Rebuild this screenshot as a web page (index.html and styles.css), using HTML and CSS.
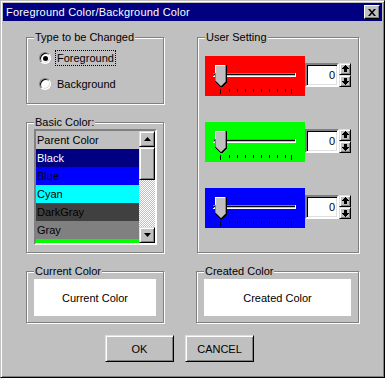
FILE: index.html
```html
<!DOCTYPE html>
<html>
<head>
<meta charset="utf-8">
<link rel="stylesheet" href="styles.css">
</head>
<body>
<div class="window">
  <div class="titlebar">
    <span class="title">Foreground Color/Background Color</span>
    <div class="close"><svg width="8" height="7" viewBox="0 0 8 7"><polygon points="0,0 2,0 8,7 6,7" fill="#000"/><polygon points="6,0 8,0 2,7 0,7" fill="#000"/></svg></div>
  </div>
  <div class="content">
    <div class="top">
      <div class="col-left">
        <div class="group g-type">
          <span class="legend">Type to be Changed</span>
          <div class="radio-row">
            <span class="radio checked"></span><span class="rlabel focus">Foreground</span>
          </div>
          <div class="radio-row">
            <span class="radio"></span><span class="rlabel">Background</span>
          </div>
        </div>
        <div class="group g-basic">
          <span class="legend">Basic Color:</span>
          <div class="listbox">
            <div class="items">
              <div class="item">Parent Color</div>
              <div class="item sel">Black</div>
              <div class="item c-blue">Blue</div>
              <div class="item c-cyan">Cyan</div>
              <div class="item c-dgray">DarkGray</div>
              <div class="item c-gray">Gray</div>
              <div class="item c-green">Green</div>
            </div>
            <div class="vscroll">
              <div class="sbtn"><svg width="7" height="4" viewBox="0 0 7 4"><polygon points="3.5,0 7,4 0,4" fill="#000"/></svg></div>
              <div class="thumb"></div>
              <div class="track"></div>
              <div class="sbtn"><svg width="7" height="4" viewBox="0 0 7 4"><polygon points="0,0 7,0 3.5,4" fill="#000"/></svg></div>
            </div>
          </div>
        </div>
      </div>
      <div class="group g-user">
        <span class="legend">User Setting</span>
        <div class="setting">
          <div class="panel red">
            <svg class="slider" width="100" height="40" viewBox="0 0 100 40" shape-rendering="crispEdges">
              <rect x="8" y="17" width="83" height="1" fill="#808080"/>
              <rect x="9" y="18" width="81" height="1" fill="#000"/>
              <rect x="9" y="19" width="81" height="1" fill="#c0c0c0"/>
              <rect x="8" y="20" width="83" height="1" fill="#fff"/>
              <rect x="90" y="17" width="1" height="4" fill="#fff"/>
              <polygon points="10,9 22,9 22,26 17,31 15,31 10,26" fill="#000"/>
              <polygon points="10,9 21,9 21,26 16,30 15,30 10,25" fill="#808080"/>
              <polygon points="10,9 20,9 20,26 16,29 15,29 11,25" fill="#fff"/>
              <polygon points="11,10 20,10 20,25 16,29 15,29 11,25" fill="#c0c0c0"/>
              <rect x="20" y="10" width="1" height="16" fill="#808080"/>
              <g fill="#000">
                <rect x="15" y="33" width="1" height="5"/>
                <rect x="24" y="33" width="1" height="3"/>
                <rect x="32" y="33" width="1" height="3"/>
                <rect x="40" y="33" width="1" height="3"/>
                <rect x="48" y="33" width="1" height="3"/>
                <rect x="56" y="33" width="1" height="3"/>
                <rect x="64" y="33" width="1" height="3"/>
                <rect x="72" y="33" width="1" height="3"/>
                <rect x="80" y="33" width="1" height="3"/>
                <rect x="86" y="33" width="1" height="5"/>
              </g>
            </svg>
          </div>
          <div class="spin">
            <div class="edit">0</div>
            <div class="spinbtns">
              <div class="spbtn"><svg width="7" height="8" viewBox="0 0 7 8" shape-rendering="crispEdges"><polygon points="3,0 4,0 7,4 0,4" fill="#000"/><rect x="2" y="4" width="3" height="3" fill="#000"/></svg></div>
              <div class="spbtn"><svg width="7" height="8" viewBox="0 0 7 8" shape-rendering="crispEdges"><rect x="2" y="1" width="3" height="3" fill="#000"/><polygon points="0,4 7,4 4,8 3,8" fill="#000"/></svg></div>
            </div>
          </div>
        </div>
        <div class="setting">
          <div class="panel green">
            <svg class="slider" width="100" height="40" viewBox="0 0 100 40" shape-rendering="crispEdges">
              <rect x="8" y="17" width="83" height="1" fill="#808080"/>
              <rect x="9" y="18" width="81" height="1" fill="#000"/>
              <rect x="9" y="19" width="81" height="1" fill="#c0c0c0"/>
              <rect x="8" y="20" width="83" height="1" fill="#fff"/>
              <rect x="90" y="17" width="1" height="4" fill="#fff"/>
              <polygon points="10,9 22,9 22,26 17,31 15,31 10,26" fill="#000"/>
              <polygon points="10,9 21,9 21,26 16,30 15,30 10,25" fill="#808080"/>
              <polygon points="10,9 20,9 20,26 16,29 15,29 11,25" fill="#fff"/>
              <polygon points="11,10 20,10 20,25 16,29 15,29 11,25" fill="#c0c0c0"/>
              <rect x="20" y="10" width="1" height="16" fill="#808080"/>
              <g fill="#000">
                <rect x="15" y="33" width="1" height="5"/>
                <rect x="24" y="33" width="1" height="3"/>
                <rect x="32" y="33" width="1" height="3"/>
                <rect x="40" y="33" width="1" height="3"/>
                <rect x="48" y="33" width="1" height="3"/>
                <rect x="56" y="33" width="1" height="3"/>
                <rect x="64" y="33" width="1" height="3"/>
                <rect x="72" y="33" width="1" height="3"/>
                <rect x="80" y="33" width="1" height="3"/>
                <rect x="86" y="33" width="1" height="5"/>
              </g>
            </svg>
          </div>
          <div class="spin">
            <div class="edit">0</div>
            <div class="spinbtns">
              <div class="spbtn"><svg width="7" height="8" viewBox="0 0 7 8" shape-rendering="crispEdges"><polygon points="3,0 4,0 7,4 0,4" fill="#000"/><rect x="2" y="4" width="3" height="3" fill="#000"/></svg></div>
              <div class="spbtn"><svg width="7" height="8" viewBox="0 0 7 8" shape-rendering="crispEdges"><rect x="2" y="1" width="3" height="3" fill="#000"/><polygon points="0,4 7,4 4,8 3,8" fill="#000"/></svg></div>
            </div>
          </div>
        </div>
        <div class="setting">
          <div class="panel blue">
            <svg class="slider" width="100" height="40" viewBox="0 0 100 40" shape-rendering="crispEdges">
              <rect x="8" y="17" width="83" height="1" fill="#808080"/>
              <rect x="9" y="18" width="81" height="1" fill="#000"/>
              <rect x="9" y="19" width="81" height="1" fill="#c0c0c0"/>
              <rect x="8" y="20" width="83" height="1" fill="#fff"/>
              <rect x="90" y="17" width="1" height="4" fill="#fff"/>
              <polygon points="10,9 22,9 22,26 17,31 15,31 10,26" fill="#000"/>
              <polygon points="10,9 21,9 21,26 16,30 15,30 10,25" fill="#808080"/>
              <polygon points="10,9 20,9 20,26 16,29 15,29 11,25" fill="#fff"/>
              <polygon points="11,10 20,10 20,25 16,29 15,29 11,25" fill="#c0c0c0"/>
              <rect x="20" y="10" width="1" height="16" fill="#808080"/>
              <g fill="#000">
                <rect x="15" y="33" width="1" height="5"/>
                <rect x="24" y="33" width="1" height="3"/>
                <rect x="32" y="33" width="1" height="3"/>
                <rect x="40" y="33" width="1" height="3"/>
                <rect x="48" y="33" width="1" height="3"/>
                <rect x="56" y="33" width="1" height="3"/>
                <rect x="64" y="33" width="1" height="3"/>
                <rect x="72" y="33" width="1" height="3"/>
                <rect x="80" y="33" width="1" height="3"/>
                <rect x="86" y="33" width="1" height="5"/>
              </g>
            </svg>
          </div>
          <div class="spin">
            <div class="edit">0</div>
            <div class="spinbtns">
              <div class="spbtn"><svg width="7" height="8" viewBox="0 0 7 8" shape-rendering="crispEdges"><polygon points="3,0 4,0 7,4 0,4" fill="#000"/><rect x="2" y="4" width="3" height="3" fill="#000"/></svg></div>
              <div class="spbtn"><svg width="7" height="8" viewBox="0 0 7 8" shape-rendering="crispEdges"><rect x="2" y="1" width="3" height="3" fill="#000"/><polygon points="0,4 7,4 4,8 3,8" fill="#000"/></svg></div>
            </div>
          </div>
        </div>
      </div>
    </div>
    <div class="bottom">
      <div class="group g-current">
        <span class="legend">Current Color</span>
        <div class="swatch">Current Color</div>
      </div>
      <div class="group g-created">
        <span class="legend">Created Color</span>
        <div class="swatch">Created Color</div>
      </div>
    </div>
    <div class="buttons">
      <div class="btn">OK</div>
      <div class="btn">CANCEL</div>
    </div>
  </div>
</div>
</body>
</html>
```
FILE: styles.css
```css
* { box-sizing: border-box; }
body {
  margin: 0;
  font-family: "Liberation Sans", Arial, sans-serif;
  font-size: 11px;
  color: #000;
  background: #c0c0c0;
}
.window {
  width: 385px;
  height: 378px;
  background: #c0c0c0;
  border: 1px solid;
  border-color: #c0c0c0 #000 #000 #c0c0c0;
  box-shadow: inset 1px 1px 0 #fff, inset -1px -1px 0 #808080;
  padding: 2px;
}
.titlebar {
  height: 18px;
  background: #000080;
  color: #fff;
  display: flex;
  justify-content: space-between;
  align-items: flex-start;
  padding-left: 3px;
}
.title {
  line-height: 18px;
  font-size: 11px;
  letter-spacing: 0.2px;
}
.close {
  margin: 2px 2px 0 0;
  width: 16px;
  height: 14px;
  background: #c0c0c0;
  border: 1px solid;
  border-color: #fff #000 #000 #fff;
  box-shadow: inset -1px -1px 0 #808080;
  display: flex;
  align-items: center;
  justify-content: center;
  padding-right: 1px;
}
.close svg { display: block; }
.content {
  padding: 16px 0 0 23px;
}
.top { display: flex; align-items: flex-start; }
.col-left { width: 138px; display: flex; flex-direction: column; gap: 18px; }
.group {
  position: relative;
  border: 1px solid #808080;
  box-shadow: inset 1px 1px 0 #fff, 1px 1px 0 #fff;
}
.legend {
  position: absolute;
  top: -7px;
  left: 7px;
  padding: 0 1px;
  background: #c0c0c0;
  line-height: 13px;
  white-space: nowrap;
}
.g-type { height: 67px; padding: 12px 0 0 12px; display: flex; flex-direction: column; gap: 10px; }
.radio-row { display: flex; align-items: center; height: 16px; }
.radio {
  width: 12px;
  height: 12px;
  border-radius: 50%;
  background: #fff;
  border: 1px solid;
  border-color: #808080 #fff #fff #808080;
  box-shadow: inset 1px 1px 0 #000, inset -1px -1px 0 #dfdfdf;
  display: flex;
  align-items: center;
  justify-content: center;
  margin-right: 4px;
}
.radio.checked::after {
  content: "";
  width: 5px;
  height: 5px;
  border-radius: 50%;
  background: #000;
}
.rlabel {
  border: 1px dotted transparent;
  padding: 0 1px;
  line-height: 14px;
}
.rlabel.focus { border-color: #000; }
.g-basic { height: 131px; padding: 6px 0 0 7px; }
.listbox {
  width: 123px;
  height: 116px;
  border: 2px solid;
  border-color: #808080 #fff #fff #808080;
  box-shadow: inset 1px 1px 0 #000, inset -1px -1px 0 #dfdfdf;
  display: flex;
  padding: 0;
}
.items { flex: 1; overflow: hidden; background: #c0c0c0; }
.item { height: 18px; line-height: 18px; padding-left: 1px; white-space: nowrap; }
.item.sel { background: #000080; color: #fff; }
.c-blue { background: #0000ff; }
.c-cyan { background: #00ffff; }
.c-dgray { background: #404040; }
.c-gray { background: #808080; }
.c-green { background: #00ff00; }
.vscroll { width: 16px; display: flex; flex-direction: column; }
.sbtn, .thumb, .spbtn, .btn {
  background: #c0c0c0;
  border: 1px solid;
  border-color: #dfdfdf #000 #000 #dfdfdf;
  box-shadow: inset 1px 1px 0 #fff, inset -1px -1px 0 #808080;
}
.sbtn { height: 16px; display: flex; align-items: center; justify-content: center; }
.sbtn svg { display: block; }
.thumb { height: 33px; }
.track {
  flex: 1;
  background: repeating-conic-gradient(#fff 0 25%, #c0c0c0 0 50%) 0 0 / 2px 2px;
}
.g-user {
  margin-left: 33px;
  width: 162px;
  height: 216px;
  padding: 18px 0 0 7px;
  display: flex;
  flex-direction: column;
  gap: 26px;
}
.setting { display: flex; align-items: flex-start; }
.panel { width: 100px; height: 40px; }
.panel svg { display: block; }
.red { background: #ff0000; }
.green { background: #00ff00; }
.blue { background: #0000ff; }
.spin { display: flex; margin-top: 7px; }
.edit {
  width: 34px;
  height: 24px;
  background: #fff;
  color: #000;
  border: 2px solid;
  border-color: #808080 #fff #fff #808080;
  box-shadow: inset 1px 1px 0 #000, inset -1px -1px 0 #dfdfdf;
  text-align: right;
  padding-right: 2px;
  line-height: 20px;
}
.spinbtns { display: flex; flex-direction: column; }
.spbtn { width: 12px; height: 12px; display: flex; align-items: center; justify-content: center; }
.spbtn svg { display: block; }
.bottom { display: flex; margin-top: 18px; }
.g-current { width: 138px; height: 52px; padding: 7px 0 0 7px; }
.g-created { margin-left: 32px; width: 163px; height: 52px; padding: 7px 0 0 7px; }
.swatch {
  height: 37px;
  background: #fff;
  display: flex;
  align-items: center;
  justify-content: center;
}
.g-current .swatch { width: 122px; }
.g-created .swatch { width: 147px; }
.buttons { display: flex; gap: 11px; margin: 12px 0 0 79px; }
.btn {
  width: 69px;
  height: 27px;
  display: flex;
  align-items: center;
  justify-content: center;
}
```
